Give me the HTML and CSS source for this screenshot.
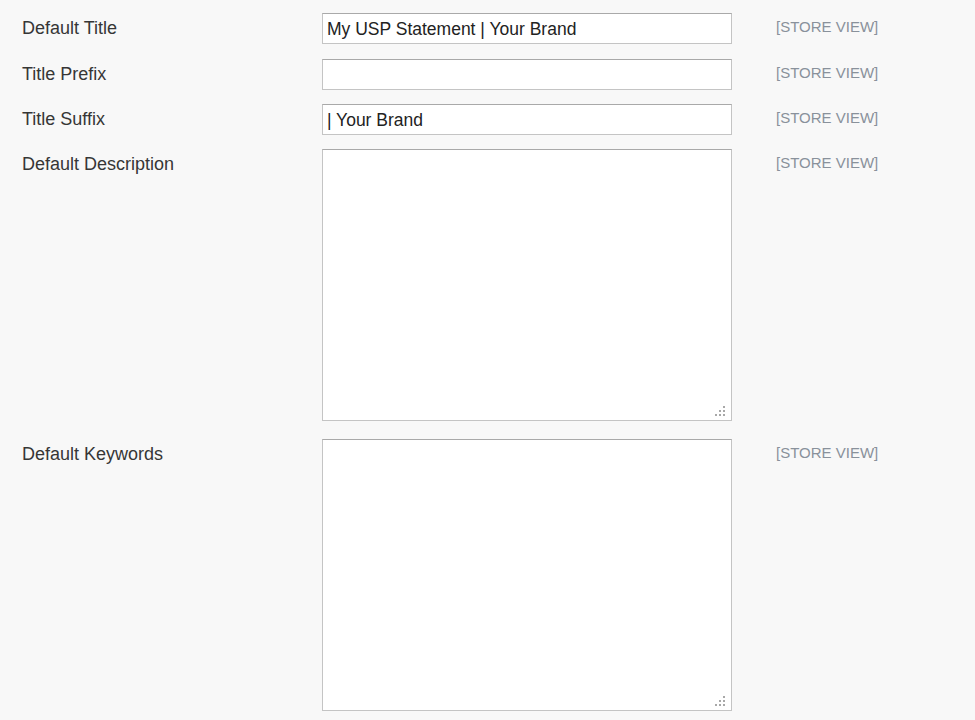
FILE: index.html
```html
<!DOCTYPE html>
<html lang="en">
<head>
    <meta charset="UTF-8">
    <title>Default Page Meta</title>
    <link rel="stylesheet" href="styles.css">
</head>
<body>

<form class="config-form">
    <div class="row row-first">
        <label class="label" for="title">Default Title</label>
        <div class="field"><input type="text" id="title" class="input-text" value="My USP Statement | Your Brand"></div>
        <div class="scope">[STORE VIEW]</div>
    </div>

    <div class="row">
        <label class="label" for="prefix">Title Prefix</label>
        <div class="field"><input type="text" id="prefix" class="input-text" value=""></div>
        <div class="scope">[STORE VIEW]</div>
    </div>

    <div class="row">
        <label class="label" for="suffix">Title Suffix</label>
        <div class="field"><input type="text" id="suffix" class="input-text" value="| Your Brand"></div>
        <div class="scope">[STORE VIEW]</div>
    </div>

    <div class="row row-textarea">
        <label class="label" for="description">Default Description</label>
        <div class="field field-textarea"><textarea id="description" class="textarea"></textarea></div>
        <div class="scope">[STORE VIEW]</div>
    </div>

    <div class="row row-textarea">
        <label class="label" for="keywords">Default Keywords</label>
        <div class="field field-textarea"><textarea id="keywords" class="textarea"></textarea></div>
        <div class="scope">[STORE VIEW]</div>
    </div>
</form>

</body>
</html>
```

FILE: styles.css
```css
* {
    margin: 0;
    padding: 0;
    box-sizing: border-box;
}

body {
    background-color: #f8f8f8;
    font-family: "Liberation Sans", Arial, sans-serif;
    color: #333;
    overflow: hidden;
}

.config-form {
    padding: 13px 0 0 22px;
}

.row {
    display: grid;
    grid-template-columns: 300px 410px auto;
    margin-bottom: 14px;
}

.row-first {
    margin-bottom: 15px;
}

.row-textarea {
    margin-bottom: 18px;
}

.label {
    font-size: 18px;
    line-height: 20px;
    padding-top: 5px;
    color: #363636;
}

.input-text {
    display: block;
    width: 410px;
    height: 31px;
    padding: 1px 4px 0;
    font-family: inherit;
    font-size: 17.5px;
    color: #222;
    background-color: #fff;
    border: 1px solid #c4c4c4;
    border-top-color: #a9a9a9;
    outline: none;
}

.field-textarea {
    position: relative;
}

/* dotted resize grip */
.field-textarea::after {
    content: "";
    position: absolute;
    right: 7px;
    bottom: 5px;
    width: 2px;
    height: 2px;
    background-color: #a8a8a8;
    box-shadow:
        -4px 0 #a8a8a8, -8px 0 #a8a8a8,
        0 -4px #a8a8a8, -4px -4px #a8a8a8,
        0 -8px #a8a8a8;
    pointer-events: none;
}

.textarea {
    display: block;
    width: 410px;
    height: 272px;
    resize: none;
    font-family: inherit;
    font-size: 17.5px;
    background-color: #fff;
    border: 1px solid #c4c4c4;
    border-top-color: #a9a9a9;
    outline: none;
}

.scope {
    font-size: 15px;
    line-height: 18px;
    padding: 5px 0 0 44px;
    color: #89919b;
    text-transform: uppercase;
}
```
